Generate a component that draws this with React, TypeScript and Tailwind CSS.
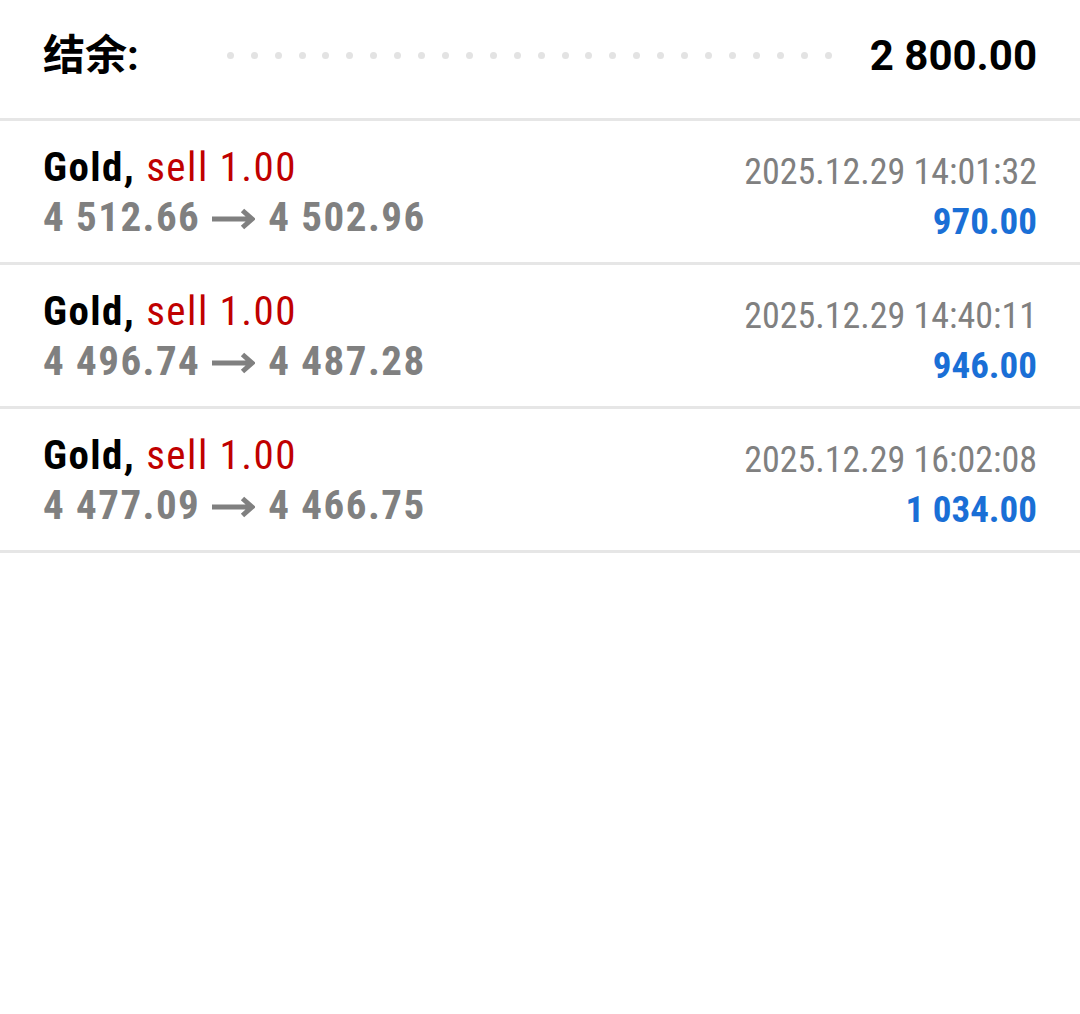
import React from 'react'

interface Deal {
  open: string
  close: string
  time: string
  profit: string
}

const deals: Deal[] = [
  { open: '4 512.66', close: '4 502.96', time: '2025.12.29 14:01:32', profit: '970.00' },
  { open: '4 496.74', close: '4 487.28', time: '2025.12.29 14:40:11', profit: '946.00' },
  { open: '4 477.09', close: '4 466.75', time: '2025.12.29 16:02:08', profit: '1 034.00' },
]

const font = { fontFamily: 'Roboto, "Noto Sans CJK SC", sans-serif' }

function Arrow() {
  return (
    <svg width="43" height="22" viewBox="0 0 43 22" className="inline-block ml-[12px] mr-[13px] align-[1px]">
      <path d="M0 11H40M30.5 2.5L40 11L30.5 19.5" fill="none" stroke="#808080" strokeWidth="5" />
    </svg>
  )
}

function DealRow({ deal }: { deal: Deal }) {
  return (
    <li className="flex items-start justify-between px-[43px] h-[144px] border-b-[3px] border-[#e6e6e6] font-stretch-condensed">
      <div className="flex flex-col pt-[21px] tracking-[1.45px]">
        <div className="text-[41px] leading-[50px] whitespace-nowrap">
          <span className="font-bold text-black">Gold,</span>{' '}
          <span className="text-[#c00000]">sell 1.00</span>
        </div>
        <div className="text-[41px] leading-[50px] font-bold text-[#808080] whitespace-nowrap">
          {deal.open}
          <Arrow />
          {deal.close}
        </div>
      </div>
      <div className="flex flex-col items-end pt-[26px]">
        <div className="text-[36px] leading-[50px] text-[#808080] whitespace-nowrap">{deal.time}</div>
        <div className="text-[37px] leading-[50px] font-bold text-[#1a6fd6] whitespace-nowrap">{deal.profit}</div>
      </div>
    </li>
  )
}

export default function App() {
  return (
    <div className="w-[1080px] h-[1014px] bg-white" style={font}>
      <div className="flex items-center h-[121px] px-[43px] pb-[8px] border-b-[3px] border-[#e6e6e6]">
        <span className="text-[42px] font-bold text-black">结余:</span>
        <div className="flex flex-1 justify-between ml-[88px] mr-[38px]">
          {Array.from({ length: 26 }).map((_, i) => (
            <span key={i} className="w-[7px] h-[7px] rounded-full bg-[#e3e3e3]" />
          ))}
        </div>
        <span className="text-[42px] font-bold text-black">2 800.00</span>
      </div>
      <ul>
        {deals.map((d) => (
          <DealRow key={d.time} deal={d} />
        ))}
      </ul>
    </div>
  )
}
